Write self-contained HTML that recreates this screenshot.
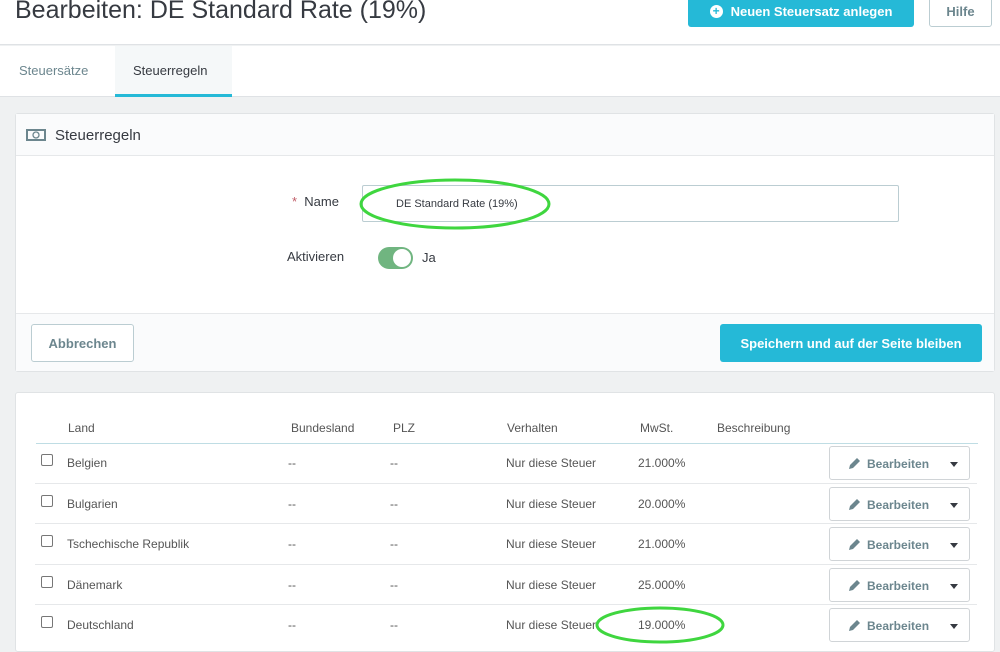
<!DOCTYPE html><html><head><style>
*{box-sizing:border-box;margin:0;padding:0}
body{width:1000px;height:646px;overflow:hidden;background:#eff1f2;font-family:"Liberation Sans",sans-serif;color:#363a41;position:relative}
.abs{position:absolute}
.top{left:0;top:0;width:1000px;height:45px;background:#fff;border-bottom:1px solid #dfe2e5}
.tabs{left:0;top:46px;width:1000px;height:51px;background:#fff;border-bottom:1px solid #dfe2e5}
.btn{position:absolute;border-radius:3px;font-size:13px;font-weight:bold;display:flex;align-items:center;justify-content:center}
.p{background:#fff;border:1px solid #e0e3e5;border-radius:3px}
td,th{font-size:12px;color:#555;text-align:left;font-weight:normal}
.row{position:absolute;left:35px;width:942px;height:40px;border-top:1px solid #e6e8ea;font-size:12px;color:#555}
.row span{position:absolute;top:13px}
.cb{position:absolute;left:6px;top:11px;width:12px;height:12px;border:1px solid #777;border-radius:2px}
.eb{position:absolute;left:794px;top:3px;width:141px;height:34px;border:1px solid #d0d4d7;border-radius:3px;background:#fff}
.eb b{position:absolute;left:37px;top:10px;font-size:12px;color:#6c868e}
.eb i{position:absolute;right:11px;top:15px;border-left:4px solid transparent;border-right:4px solid transparent;border-top:5px solid #363a41}
</style></head><body>
<div class="abs top">
<div class="abs" style="left:15px;top:-4px;font-size:25px;color:#363a41">Bearbeiten: DE Standard Rate (19%)</div>
<div class="btn" style="left:688px;top:-4px;width:226px;height:31px;background:#25b9d7;color:#fff"><span style="display:inline-block;width:13px;height:13px;border-radius:50%;background:#fff;color:#25b9d7;font-size:12px;line-height:13px;text-align:center;margin-right:8px">+</span>Neuen Steuersatz anlegen</div>
<div class="btn" style="left:929px;top:-4px;width:63px;height:31px;border:1px solid #bbcdd2;color:#6c868e;background:#fff">Hilfe</div>
</div>
<div class="abs tabs">
<div class="abs" style="left:19px;top:17px;font-size:13px;color:#6c868e">Steuersätze</div>
<div class="abs" style="left:115px;top:0;width:117px;height:51px;background:#f5f8f9;border-bottom:3px solid #25b9d7"><span style="position:absolute;left:18px;top:17px;font-size:13px;color:#363a41">Steuerregeln</span></div>
</div>
<div class="abs p" style="left:15px;top:113px;width:980px;height:259px">
<div class="abs" style="left:0;top:0;width:978px;height:42px;background:#fafbfc;border-bottom:1px solid #e6e8ea">
<svg class="abs" style="left:10px;top:15px" width="20" height="12"><rect x="1" y="1" width="18" height="10" fill="none" stroke="#6c868e" stroke-width="2"/><circle cx="10" cy="6" r="3" fill="none" stroke="#6c868e" stroke-width="1.3"/></svg>
<span class="abs" style="left:39px;top:13px;font-size:15px;color:#363a41">Steuerregeln</span></div>
<span class="abs" style="left:276px;top:80px;font-size:13px"><span style="color:#c05c67">*</span>&nbsp; Name</span>
<div class="abs" style="left:346px;top:71px;width:537px;height:37px;border:1px solid #bbcdd2;border-radius:2px;font-size:11px;padding:12px 0 0 33px;color:#363a41">DE Standard Rate (19%)</div>
<span class="abs" style="left:271px;top:135px;font-size:13px">Aktivieren</span>
<div class="abs" style="left:362px;top:133px;width:35px;height:22px;border-radius:11px;background:#70b580"><div class="abs" style="left:15px;top:2px;width:18px;height:18px;border-radius:50%;background:#fff"></div></div>
<span class="abs" style="left:406px;top:136px;font-size:13px">Ja</span>
<div class="abs" style="left:0;top:199px;width:978px;height:58px;background:#fafbfc;border-top:1px solid #e6e8ea"></div>
<div class="btn" style="left:15px;top:210px;width:103px;height:38px;border:1px solid #bbcdd2;color:#6c868e;background:#fff">Abbrechen</div>
<div class="btn" style="left:704px;top:210px;width:262px;height:38px;background:#25b9d7;color:#fff">Speichern und auf der Seite bleiben</div>
</div>
<div class="abs p" style="left:15px;top:392px;width:980px;height:260px">
<div class="abs" style="left:20px;top:50px;width:942px;height:1px;background:#bfdde4"></div>
<div class="abs" style="left:52px;top:28px;font-size:12px;color:#555">Land</div>
<div class="abs" style="left:275px;top:28px;font-size:12px;color:#555">Bundesland</div>
<div class="abs" style="left:377px;top:28px;font-size:12px;color:#555">PLZ</div>
<div class="abs" style="left:491px;top:28px;font-size:12px;color:#555">Verhalten</div>
<div class="abs" style="left:624px;top:28px;font-size:12px;color:#555">MwSt.</div>
<div class="abs" style="left:701px;top:28px;font-size:12px;color:#555">Beschreibung</div>
</div>
<div class="row" style="top:443px;border-top:none"><div class="cb"></div><span style="left:32px">Belgien</span><span style="left:253px">--</span><span style="left:355px">--</span><span style="left:471px">Nur diese Steuer</span><span style="left:603px">21.000%</span><div class="eb"><b>Bearbeiten</b><i></i><svg class="abs" style="left:18px;top:10px" width="13" height="13"><path d="M1 12l1-4 7-7 3 3-7 7z" fill="#6c868e"/></svg></div></div>
<div class="row" style="top:483px"><div class="cb"></div><span style="left:32px">Bulgarien</span><span style="left:253px">--</span><span style="left:355px">--</span><span style="left:471px">Nur diese Steuer</span><span style="left:603px">20.000%</span><div class="eb"><b>Bearbeiten</b><i></i><svg class="abs" style="left:18px;top:10px" width="13" height="13"><path d="M1 12l1-4 7-7 3 3-7 7z" fill="#6c868e"/></svg></div></div>
<div class="row" style="top:523px"><div class="cb"></div><span style="left:32px">Tschechische Republik</span><span style="left:253px">--</span><span style="left:355px">--</span><span style="left:471px">Nur diese Steuer</span><span style="left:603px">21.000%</span><div class="eb"><b>Bearbeiten</b><i></i><svg class="abs" style="left:18px;top:10px" width="13" height="13"><path d="M1 12l1-4 7-7 3 3-7 7z" fill="#6c868e"/></svg></div></div>
<div class="row" style="top:564px"><div class="cb"></div><span style="left:32px">Dänemark</span><span style="left:253px">--</span><span style="left:355px">--</span><span style="left:471px">Nur diese Steuer</span><span style="left:603px">25.000%</span><div class="eb"><b>Bearbeiten</b><i></i><svg class="abs" style="left:18px;top:10px" width="13" height="13"><path d="M1 12l1-4 7-7 3 3-7 7z" fill="#6c868e"/></svg></div></div>
<div class="row" style="top:604px"><div class="cb"></div><span style="left:32px">Deutschland</span><span style="left:253px">--</span><span style="left:355px">--</span><span style="left:471px">Nur diese Steuer</span><span style="left:603px">19.000%</span><div class="eb"><b>Bearbeiten</b><i></i><svg class="abs" style="left:18px;top:10px" width="13" height="13"><path d="M1 12l1-4 7-7 3 3-7 7z" fill="#6c868e"/></svg></div></div>
<svg class="abs" style="left:0;top:0" width="1000" height="646"><ellipse cx="455" cy="204" rx="94" ry="24" fill="none" stroke="#3fd63f" stroke-width="3"/><ellipse cx="660" cy="625" rx="63" ry="17" fill="none" stroke="#3fd63f" stroke-width="3"/></svg>
</body></html>
